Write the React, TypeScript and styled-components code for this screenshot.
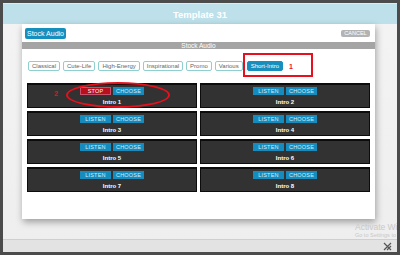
import styled, { createGlobalStyle } from "styled-components";

const GlobalStyle = createGlobalStyle`
  html, body { margin: 0; padding: 0; background: #4b4b4b; }
  body { font-family: "Liberation Sans", Arial, sans-serif; }
`;

const tabs = ["Classical", "Cute-Life", "High-Energy", "Inspirational", "Promo", "Various"];
const intros = [1, 2, 3, 4, 5, 6, 7, 8];

export default function App() {
  return (
    <>
      <GlobalStyle />
      <Frame>
        <TitleBar>Template 31</TitleBar>
        <Stage>
          <Modal>
            <ModalHeader>
              <HeaderButton>Stock Audio</HeaderButton>
              <CancelButton>CANCEL</CancelButton>
            </ModalHeader>
            <SectionBar>Stock Audio</SectionBar>
            <TabRow>
              {tabs.map((t) => (
                <Tab key={t}>{t}</Tab>
              ))}
              <Highlight>
                <Tab $active>Short-Intro</Tab>
                <Marker>1</Marker>
              </Highlight>
            </TabRow>
            <IntroGrid>
              {intros.map((n) => (
                <IntroCard key={n}>
                  {n === 1 && (
                    <>
                      <CardMarker>2</CardMarker>
                      <Ellipse />
                    </>
                  )}
                  <ButtonRow>
                    <SmallButton $stop={n === 1}>{n === 1 ? "STOP" : "LISTEN"}</SmallButton>
                    <SmallButton>CHOOSE</SmallButton>
                  </ButtonRow>
                  <IntroLabel>Intro {n}</IntroLabel>
                </IntroCard>
              ))}
            </IntroGrid>
          </Modal>
          <StatusStrip>
            <ResizeIcon width="9" height="9" viewBox="0 0 9 9">
              <path d="M1 8 L8 1 M4 8 L8 4 M1 1 L8 8" stroke="#555" strokeWidth="1.2" />
            </ResizeIcon>
          </StatusStrip>
          <Watermark>
            <WatermarkTitle>Activate Windows</WatermarkTitle>
            <WatermarkSub>Go to Settings to activate Windows.</WatermarkSub>
          </Watermark>
        </Stage>
      </Frame>
    </>
  );
}

const Frame = styled.div`
  position: relative;
  width: 400px;
  height: 255px;
  box-sizing: border-box;
  border: 3px solid #4b4b4b;
  background: #f0f0f0;
  display: flex;
  flex-direction: column;
  overflow: hidden;
`;

const TitleBar = styled.div`
  height: 21px;
  flex: none;
  background: #bde0ea;
  color: #fff;
  font-size: 9.5px;
  font-weight: bold;
  display: flex;
  align-items: center;
  justify-content: center;
  border-top: 1px solid #d8eef4;
  box-sizing: border-box;
`;

const Stage = styled.div`
  flex: 1;
  display: flex;
  flex-direction: column;
  background: linear-gradient(#f3f3f3, #eeeeee);
`;

const Modal = styled.div`
  width: 353px;
  height: 195px;
  margin-left: 19px;
  background: #fff;
  box-shadow: 1px 3px 7px rgba(0, 0, 0, 0.35);
  display: flex;
  flex-direction: column;
`;

const ModalHeader = styled.div`
  height: 18px;
  display: flex;
  align-items: flex-start;
  justify-content: space-between;
  padding: 4px 5px 0 3px;
  box-sizing: border-box;
`;

const HeaderButton = styled.div`
  height: 11px;
  padding: 0 2px;
  background: #168fbf;
  border-radius: 2px;
  color: #fff;
  font-size: 7px;
  line-height: 11px;
`;

const CancelButton = styled.div`
  margin-top: 2px;
  height: 7px;
  width: 29px;
  background: #b3b3b3;
  border-radius: 2px;
  color: #fff;
  font-size: 5.5px;
  line-height: 7px;
  text-align: center;
`;

const SectionBar = styled.div`
  height: 7px;
  background: #a4a4a4;
  color: #fff;
  font-size: 6.5px;
  line-height: 7px;
  text-align: center;
`;

const TabRow = styled.div`
  display: flex;
  align-items: center;
  gap: 3px;
  padding: 12px 6px 0 6px;
  height: 10px;
  box-sizing: content-box;
`;

const Tab = styled.div<{ $active?: boolean }>`
  height: 10px;
  box-sizing: border-box;
  padding: 0 3px;
  border: 1px solid ${(p) => (p.$active ? "#168fbf" : "#8fcfcf")};
  border-radius: 2px;
  background: ${(p) => (p.$active ? "#168fbf" : "#fff")};
  color: ${(p) => (p.$active ? "#fff" : "#666")};
  font-size: 6px;
  line-height: 8px;
  white-space: nowrap;
`;

const Highlight = styled.div`
  position: relative;
  display: flex;
  align-items: center;
  gap: 6px;
  margin-left: 1px;
  &::after {
    content: "";
    position: absolute;
    left: -4px;
    right: -20px;
    top: -8px;
    bottom: -6px;
    border: 2px solid #e8101c;
  }
`;

const Marker = styled.span`
  color: #e8101c;
  font-size: 7px;
  font-weight: bold;
`;

const IntroGrid = styled.div`
  display: grid;
  grid-template-columns: 1fr 1fr;
  column-gap: 3px;
  row-gap: 3px;
  padding: 12px 5px 0 5px;
`;

const IntroCard = styled.div`
  position: relative;
  height: 25px;
  box-sizing: border-box;
  background: #323232;
  border: 1px solid #0c0c0c;
  border-top-width: 2px;
  display: flex;
  flex-direction: column;
  align-items: center;
  padding-top: 2px;
`;

const ButtonRow = styled.div`
  display: flex;
  gap: 2px;
`;

const SmallButton = styled.div<{ $stop?: boolean }>`
  width: 31px;
  height: 8px;
  box-sizing: border-box;
  background: ${(p) => (p.$stop ? "#b80f1c" : "#168cbe")};
  border: 1px solid ${(p) => (p.$stop ? "#c9506a" : "#168cbe")};
  color: ${(p) => (p.$stop ? "#fff" : "#d2ecf7")};
  font-size: 5.5px;
  line-height: 6px;
  text-align: center;
  letter-spacing: 0.2px;
`;

const IntroLabel = styled.div`
  margin-top: 4px;
  color: #fff;
  font-size: 6px;
  font-weight: bold;
  line-height: 7px;
`;

const CardMarker = styled.span`
  position: absolute;
  left: 26px;
  top: 5px;
  color: #e8101c;
  font-size: 7px;
  font-weight: bold;
`;

const Ellipse = styled.div`
  position: absolute;
  left: 38px;
  top: -3px;
  width: 100px;
  height: 22px;
  border: 2px solid #e8101c;
  border-radius: 50%;
`;

const StatusStrip = styled.div`
  margin-top: auto;
  height: 12px;
  background: #e3e3e3;
  border-top: 1px solid #cfcfcf;
  display: flex;
  justify-content: flex-end;
  align-items: flex-end;
  padding-right: 5px;
`;

const ResizeIcon = styled.svg`
  display: block;
  margin-bottom: 1px;
`;

const Watermark = styled.div`
  position: absolute;
  left: 352px;
  top: 219px;
  color: #c9c9c9;
  white-space: nowrap;
`;

const WatermarkTitle = styled.div`
  font-size: 8.5px;
  line-height: 10px;
`;

const WatermarkSub = styled.div`
  font-size: 5.5px;
  line-height: 7px;
`;
